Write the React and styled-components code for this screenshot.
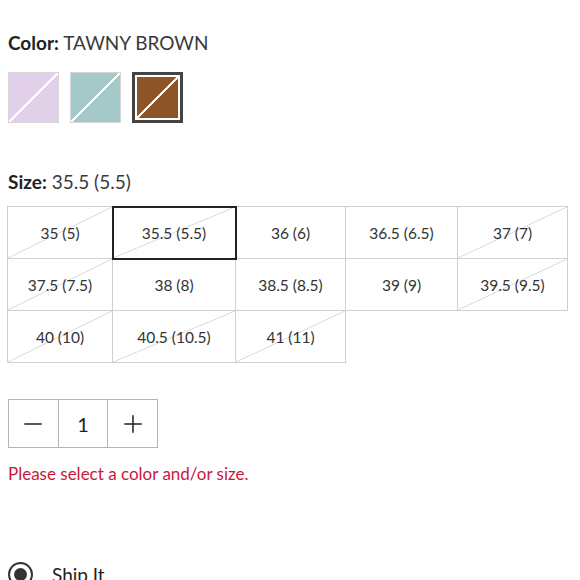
import React, { useState } from 'react';
import styled, { createGlobalStyle } from 'styled-components';
import { Minus, Plus } from 'lucide-react';

const GlobalStyle = createGlobalStyle`
  body {
    margin: 0;
    background: #fff;
    font-family: Lato, "Open Sans", "Liberation Sans", sans-serif;
    color: #333;
  }
`;

const colors = [
  { name: 'LAVENDER', hex: '#e1d0e8' },
  { name: 'SEAFOAM', hex: '#a5c8c8' },
  { name: 'TAWNY BROWN', hex: '#8c5427' },
];

const sizes = [
  { label: '35 (5)', out: true },
  { label: '35.5 (5.5)', out: true },
  { label: '36 (6)', out: false },
  { label: '36.5 (6.5)', out: false },
  { label: '37 (7)', out: true },
  { label: '37.5 (7.5)', out: true },
  { label: '38 (8)', out: false },
  { label: '38.5 (8.5)', out: false },
  { label: '39 (9)', out: false },
  { label: '39.5 (9.5)', out: true },
  { label: '40 (10)', out: true },
  { label: '40.5 (10.5)', out: true },
  { label: '41 (11)', out: true },
];

const Page = styled.div`
  width: 580px;
  height: 580px;
  overflow: hidden;
  padding: 31px 0 0 8px;
  box-sizing: border-box;
`;

const Label = styled.div`
  font-size: 19px;
  line-height: 24px;
  color: #3a3a3a;
  b {
    font-weight: 700;
    color: #222;
  }
`;

const SwatchRow = styled.div`
  display: flex;
  gap: 11px;
  margin: 17px 0 0;
`;

const Swatch = styled.button`
  width: 51px;
  height: 51px;
  padding: ${p => (p.$selected ? '2px' : '0')};
  border: ${p => (p.$selected ? '3px solid #444' : '1px solid #d6d6d6')};
  background: #fff;
  box-sizing: border-box;
  cursor: pointer;
  span {
    display: block;
    width: 100%;
    height: 100%;
    background:
      linear-gradient(to bottom right, transparent calc(50% - 1.3px), #fff calc(50% - 1px), #fff calc(50% + 1px), transparent calc(50% + 1.3px)),
      ${p => p.$color};
  }
`;

const SizeLabel = styled(Label)`
  margin-top: 47px;
`;

const SizeGrid = styled.div`
  display: grid;
  grid-template-columns: 105px 123px 110px 112px 110px;
  grid-auto-rows: 52px;
  margin: 12px 0 0 -1px;
  width: 561px;
  border-top: 1px solid #d0d0d0;
  border-left: 1px solid #d0d0d0;
  box-sizing: border-box;
`;

const SizeCell = styled.button`
  position: relative;
  border: none;
  border-right: 1px solid #d0d0d0;
  border-bottom: 1px solid #d0d0d0;
  font-family: inherit;
  font-size: 15.5px;
  color: #333;
  cursor: pointer;
  padding: 0;
  background: ${p =>
    p.$out
      ? 'linear-gradient(to bottom right, transparent calc(50% - 0.7px), #cfcfcf 50%, transparent calc(50% + 0.7px))'
      : '#fff'};
  outline: ${p => (p.$selected ? '2px solid #222' : 'none')};
  outline-offset: -1px;
  z-index: ${p => (p.$selected ? 1 : 0)};
`;

const Quantity = styled.div`
  display: flex;
  width: 150px;
  height: 49px;
  margin-top: 36px;
  border: 1px solid #b5b5b5;
  box-sizing: border-box;
`;

const QtyButton = styled.button`
  flex: 1;
  border: none;
  border-left: ${p => (p.$divider ? '1px solid #b5b5b5' : 'none')};
  background: #fff;
  font-family: inherit;
  font-size: 20px;
  color: #222;
  padding: 0;
  display: flex;
  align-items: center;
  justify-content: center;
  cursor: pointer;
`;

const ErrorText = styled.div`
  margin-top: 15px;
  font-size: 17px;
  color: #c8193a;
`;

const ShipRow = styled.label`
  display: flex;
  align-items: center;
  gap: 19px;
  margin-top: 78px;
  font-size: 19px;
  color: #222;
`;

const Radio = styled.span`
  width: 25px;
  height: 25px;
  border: 2px solid #333;
  border-radius: 50%;
  box-sizing: border-box;
  display: flex;
  align-items: center;
  justify-content: center;
  &::after {
    content: '';
    width: 13px;
    height: 13px;
    border-radius: 50%;
    background: #333;
  }
`;

export default function App() {
  const [color, setColor] = useState(2);
  const [size, setSize] = useState(1);
  const [qty, setQty] = useState(1);

  return (
    <Page>
      <GlobalStyle />
      <Label>
        <b>Color:</b> {colors[color].name}
      </Label>
      <SwatchRow>
        {colors.map((c, i) => (
          <Swatch
            key={c.name}
            $color={c.hex}
            $selected={i === color}
            aria-label={c.name}
            onClick={() => setColor(i)}
          >
            <span />
          </Swatch>
        ))}
      </SwatchRow>

      <SizeLabel>
        <b>Size:</b> {sizes[size].label}
      </SizeLabel>
      <SizeGrid>
        {sizes.map((s, i) => (
          <SizeCell
            key={s.label}
            $out={s.out}
            $selected={i === size}
            onClick={() => setSize(i)}
          >
            {s.label}
          </SizeCell>
        ))}
      </SizeGrid>

      <Quantity>
        <QtyButton aria-label="Decrease" onClick={() => setQty(Math.max(1, qty - 1))}>
          <Minus size={28} strokeWidth={1.3} />
        </QtyButton>
        <QtyButton as="div" $divider>{qty}</QtyButton>
        <QtyButton $divider aria-label="Increase" onClick={() => setQty(qty + 1)}>
          <Plus size={28} strokeWidth={1.3} />
        </QtyButton>
      </Quantity>

      <ErrorText>Please select a color and/or size.</ErrorText>

      <ShipRow>
        <Radio />
        Ship It
      </ShipRow>
    </Page>
  );
}
